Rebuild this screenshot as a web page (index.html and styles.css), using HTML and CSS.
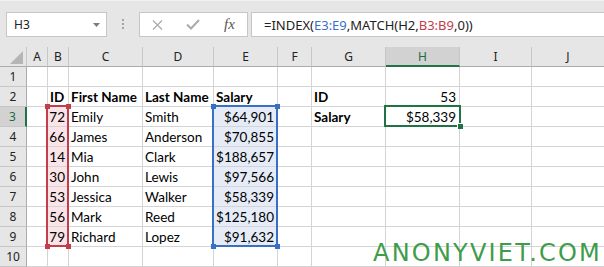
FILE: index.html
```html
<!DOCTYPE html>
<html lang="en">
<head>
  <meta charset="UTF-8" />
  <meta name="viewport" content="width=device-width, initial-scale=1.0"/>
  <title>INDEX and MATCH | Excel</title>
  <link rel="stylesheet" href="styles.css">
</head>
<body>

  <div class="toolbar">
    <div class="namebox">
      <span>H3</span>
      <svg class="caret" width="7" height="4" viewBox="0 0 7 4"><path d="M0 0H7L3.5 4Z" fill="#7b7b7b"/></svg>
    </div>
    <div class="grip"><i></i><i></i><i></i></div>
    <div class="fbuttons">
      <svg class="icon-x" width="11" height="10" viewBox="0 0 11 10"><path d="M1 0.5L10 9.5M10 0.5L1 9.5" stroke="#ababab" stroke-width="1.3" fill="none"/></svg>
      <svg class="icon-ok" width="14" height="11" viewBox="0 0 14 11"><path d="M1 5.5L5 9.5L13 1" stroke="#ababab" stroke-width="2" fill="none"/></svg>
      <span class="fx">fx</span>
    </div>
    <div class="formula">=INDEX(<span class="ref-blue">E3:E9</span>,MATCH(H2,<span class="ref-red">B3:B9</span>,0))</div>
  </div>

  <div class="sheet">
    <div class="cells">
      <!-- column headers -->
      <div class="hd corner"><svg width="13" height="13" viewBox="0 0 13 13"><path d="M0 13H13V0Z" fill="#b5b5b5"/></svg></div>
      <div class="hd">A</div><div class="hd">B</div><div class="hd">C</div><div class="hd">D</div><div class="hd">E</div>
      <div class="hd">F</div><div class="hd">G</div><div class="hd sel">H</div><div class="hd">I</div><div class="hd">J</div>

      <div class="rh">1</div>
      <div class="c"></div><div class="c"></div><div class="c"></div><div class="c"></div><div class="c"></div>
      <div class="c"></div><div class="c"></div><div class="c"></div><div class="c"></div><div class="c"></div>

      <div class="rh">2</div>
      <div class="c"></div><div class="c b">ID</div><div class="c b">First Name</div><div class="c b">Last Name</div><div class="c b">Salary</div>
      <div class="c"></div><div class="c b">ID</div><div class="c num">53</div><div class="c"></div><div class="c"></div>

      <div class="rh sel">3</div>
      <div class="c"></div><div class="c num pink">72</div><div class="c">Emily</div><div class="c">Smith</div><div class="c num blue">$64,901</div>
      <div class="c"></div><div class="c b">Salary</div><div class="c num">$58,339</div><div class="c"></div><div class="c"></div>

      <div class="rh">4</div>
      <div class="c"></div><div class="c num pink">66</div><div class="c">James</div><div class="c">Anderson</div><div class="c num blue">$70,855</div>
      <div class="c"></div><div class="c"></div><div class="c"></div><div class="c"></div><div class="c"></div>

      <div class="rh">5</div>
      <div class="c"></div><div class="c num pink">14</div><div class="c">Mia</div><div class="c">Clark</div><div class="c num blue">$188,657</div>
      <div class="c"></div><div class="c"></div><div class="c"></div><div class="c"></div><div class="c"></div>

      <div class="rh">6</div>
      <div class="c"></div><div class="c num pink">30</div><div class="c">John</div><div class="c">Lewis</div><div class="c num blue">$97,566</div>
      <div class="c"></div><div class="c"></div><div class="c"></div><div class="c"></div><div class="c"></div>

      <div class="rh">7</div>
      <div class="c"></div><div class="c num pink">53</div><div class="c">Jessica</div><div class="c">Walker</div><div class="c num blue">$58,339</div>
      <div class="c"></div><div class="c"></div><div class="c"></div><div class="c"></div><div class="c"></div>

      <div class="rh">8</div>
      <div class="c"></div><div class="c num pink">56</div><div class="c">Mark</div><div class="c">Reed</div><div class="c num blue">$125,180</div>
      <div class="c"></div><div class="c"></div><div class="c"></div><div class="c"></div><div class="c"></div>

      <div class="rh">9</div>
      <div class="c"></div><div class="c num pink">79</div><div class="c">Richard</div><div class="c">Lopez</div><div class="c num blue">$91,632</div>
      <div class="c"></div><div class="c"></div><div class="c"></div><div class="c"></div><div class="c"></div>

      <div class="rh">10</div>
      <div class="c"></div><div class="c"></div><div class="c"></div><div class="c"></div><div class="c"></div>
      <div class="c"></div><div class="c"></div><div class="c"></div><div class="c"></div><div class="c"></div>
    </div>

    <!-- selection outlines drawn on top of the cells -->
    <div class="marks">
      <div class="range range-red"><i class="tl"></i><i class="tr"></i><i class="bl"></i><i class="br"></i></div>
      <div class="range range-blue"><i class="tl"></i><i class="tr"></i><i class="bl"></i><i class="br"></i></div>
      <div class="active"><i class="handle"></i></div>
    </div>
  </div>

  <div class="watermark">ANONYVIET.COM</div>

</body>
</html>
```

FILE: styles.css
```css
body {
  margin: 0;
  width: 604px;
  height: 267px;
  overflow: hidden;
  position: relative;
  background-color: #ffffff;
  font-family: "Lato", "Liberation Sans", sans-serif;
}

/* formula bar */
.toolbar {
  display: flex;
  align-items: flex-start;
  height: 47px;
  box-sizing: border-box;
  padding: 11px 0 0 6px;
  background-color: #e6e6e6;
  border-top: 1px solid #f2f2f2;
  font-family: "Noto Sans", "Open Sans", sans-serif;
  color: #222;
}

.namebox {
  display: flex;
  align-items: center;
  justify-content: space-between;
  width: 101px;
  height: 25px;
  box-sizing: border-box;
  padding: 0 6px 0 7px;
  background-color: #fff;
  border: 1px solid #c6c6c6;
  font-size: 12px;
}

.grip {
  display: flex;
  flex-direction: column;
  gap: 2px;
  margin: 7px 0 0 15px;
}

.grip i {
  width: 2px;
  height: 2px;
  background-color: #a3a3a3;
}

.fbuttons {
  display: flex;
  align-items: center;
  width: 109px;
  height: 25px;
  box-sizing: border-box;
  margin-left: 15px;
  padding-left: 12px;
  background-color: #fff;
  border: 1px solid #c6c6c6;
}

.icon-ok {
  margin-left: 23px;
}

.fx {
  margin-left: 24px;
  font-family: "Liberation Serif", serif;
  font-style: italic;
  font-size: 15px;
  color: #555;
}

.formula {
  flex: 1;
  height: 25px;
  box-sizing: border-box;
  margin-left: 3px;
  padding: 3px 0 0 12px;
  background-color: #fff;
  border: 1px solid #c6c6c6;
  border-right: none;
  font-size: 13px;
  white-space: nowrap;
}

.ref-blue { color: #3a6fc6; }
.ref-red { color: #c43d4b; }

/* sheet grid */
.sheet {
  display: grid;
}

.cells, .marks {
  grid-area: 1 / 1;
  display: grid;
  grid-template-columns: 27px 21px 21px 74px 71px 64px 34px 74px 74px 72px 73px;
  grid-auto-rows: 20px;
}

.marks {
  pointer-events: none;
}

.c, .hd, .rh {
  box-sizing: border-box;
  border-right: 1px solid #d4d4d4;
  border-bottom: 1px solid #d4d4d4;
  overflow: visible;
  white-space: nowrap;
}

.c {
  display: flex;
  align-items: flex-end;
  padding: 0 2px 1px 2px;
  font-size: 13.5px;
  line-height: 16px;
  color: #000;
}

.c.num {
  justify-content: flex-end;
  padding-right: 3px;
}

.c.b {
  font-weight: bold;
}

.c.pink { background-color: #fae4e7; }
.c.blue { background-color: #e5ecf8; }

.hd, .rh {
  display: flex;
  align-items: center;
  justify-content: center;
  background-color: #e6e6e6;
  border-color: #c6c6c6;
  font-family: "Noto Sans", "Open Sans", sans-serif;
  font-size: 12px;
  color: #222;
}

.hd {
  border-bottom-color: #ababab;
}

.rh {
  border-right-color: #ababab;
}

.hd.corner {
  justify-content: flex-end;
  align-items: flex-end;
  padding: 0 3px 2px 0;
}

.hd.sel {
  background-color: #d2d2d2;
  border-bottom: 2px solid #217346;
  color: #1d6b40;
}

.rh.sel {
  background-color: #d2d2d2;
  border-right: 2px solid #217346;
  color: #1d6b40;
}

/* selection outlines */
.range, .active {
  position: relative;
  box-sizing: border-box;
}

.range {
  margin: -2px 0 0 -2px;
  border: 2px solid;
}

.range i {
  position: absolute;
  width: 5px;
  height: 5px;
}

.range .tl { left: -3px; top: -3px; }
.range .tr { right: -4px; top: -3px; }
.range .bl { left: -3px; bottom: -4px; }
.range .br { right: -4px; bottom: -4px; }

.range-red {
  grid-column: 3;
  grid-row: 4 / 11;
  border-color: #c43d4b;
}

.range-red i { background-color: #c43d4b; }

.range-blue {
  grid-column: 6;
  grid-row: 4 / 11;
  border-color: #3a6fc6;
}

.range-blue i { background-color: #3a6fc6; }

.active {
  grid-column: 9;
  grid-row: 4;
  margin: -2px -1px 0 -2px;
  border: 2px solid #217346;
}

.handle {
  position: absolute;
  right: -4px;
  bottom: -4px;
  width: 5px;
  height: 5px;
  background-color: #217346;
  border-top: 1px solid #fff;
  border-left: 1px solid #fff;
}

.watermark {
  position: absolute;
  right: 2px;
  bottom: 0;
  font-family: "DejaVu Sans", sans-serif;
  font-size: 24px;
  line-height: 28px;
  color: #3f9c4b;
  letter-spacing: 2.2px;
}
```
